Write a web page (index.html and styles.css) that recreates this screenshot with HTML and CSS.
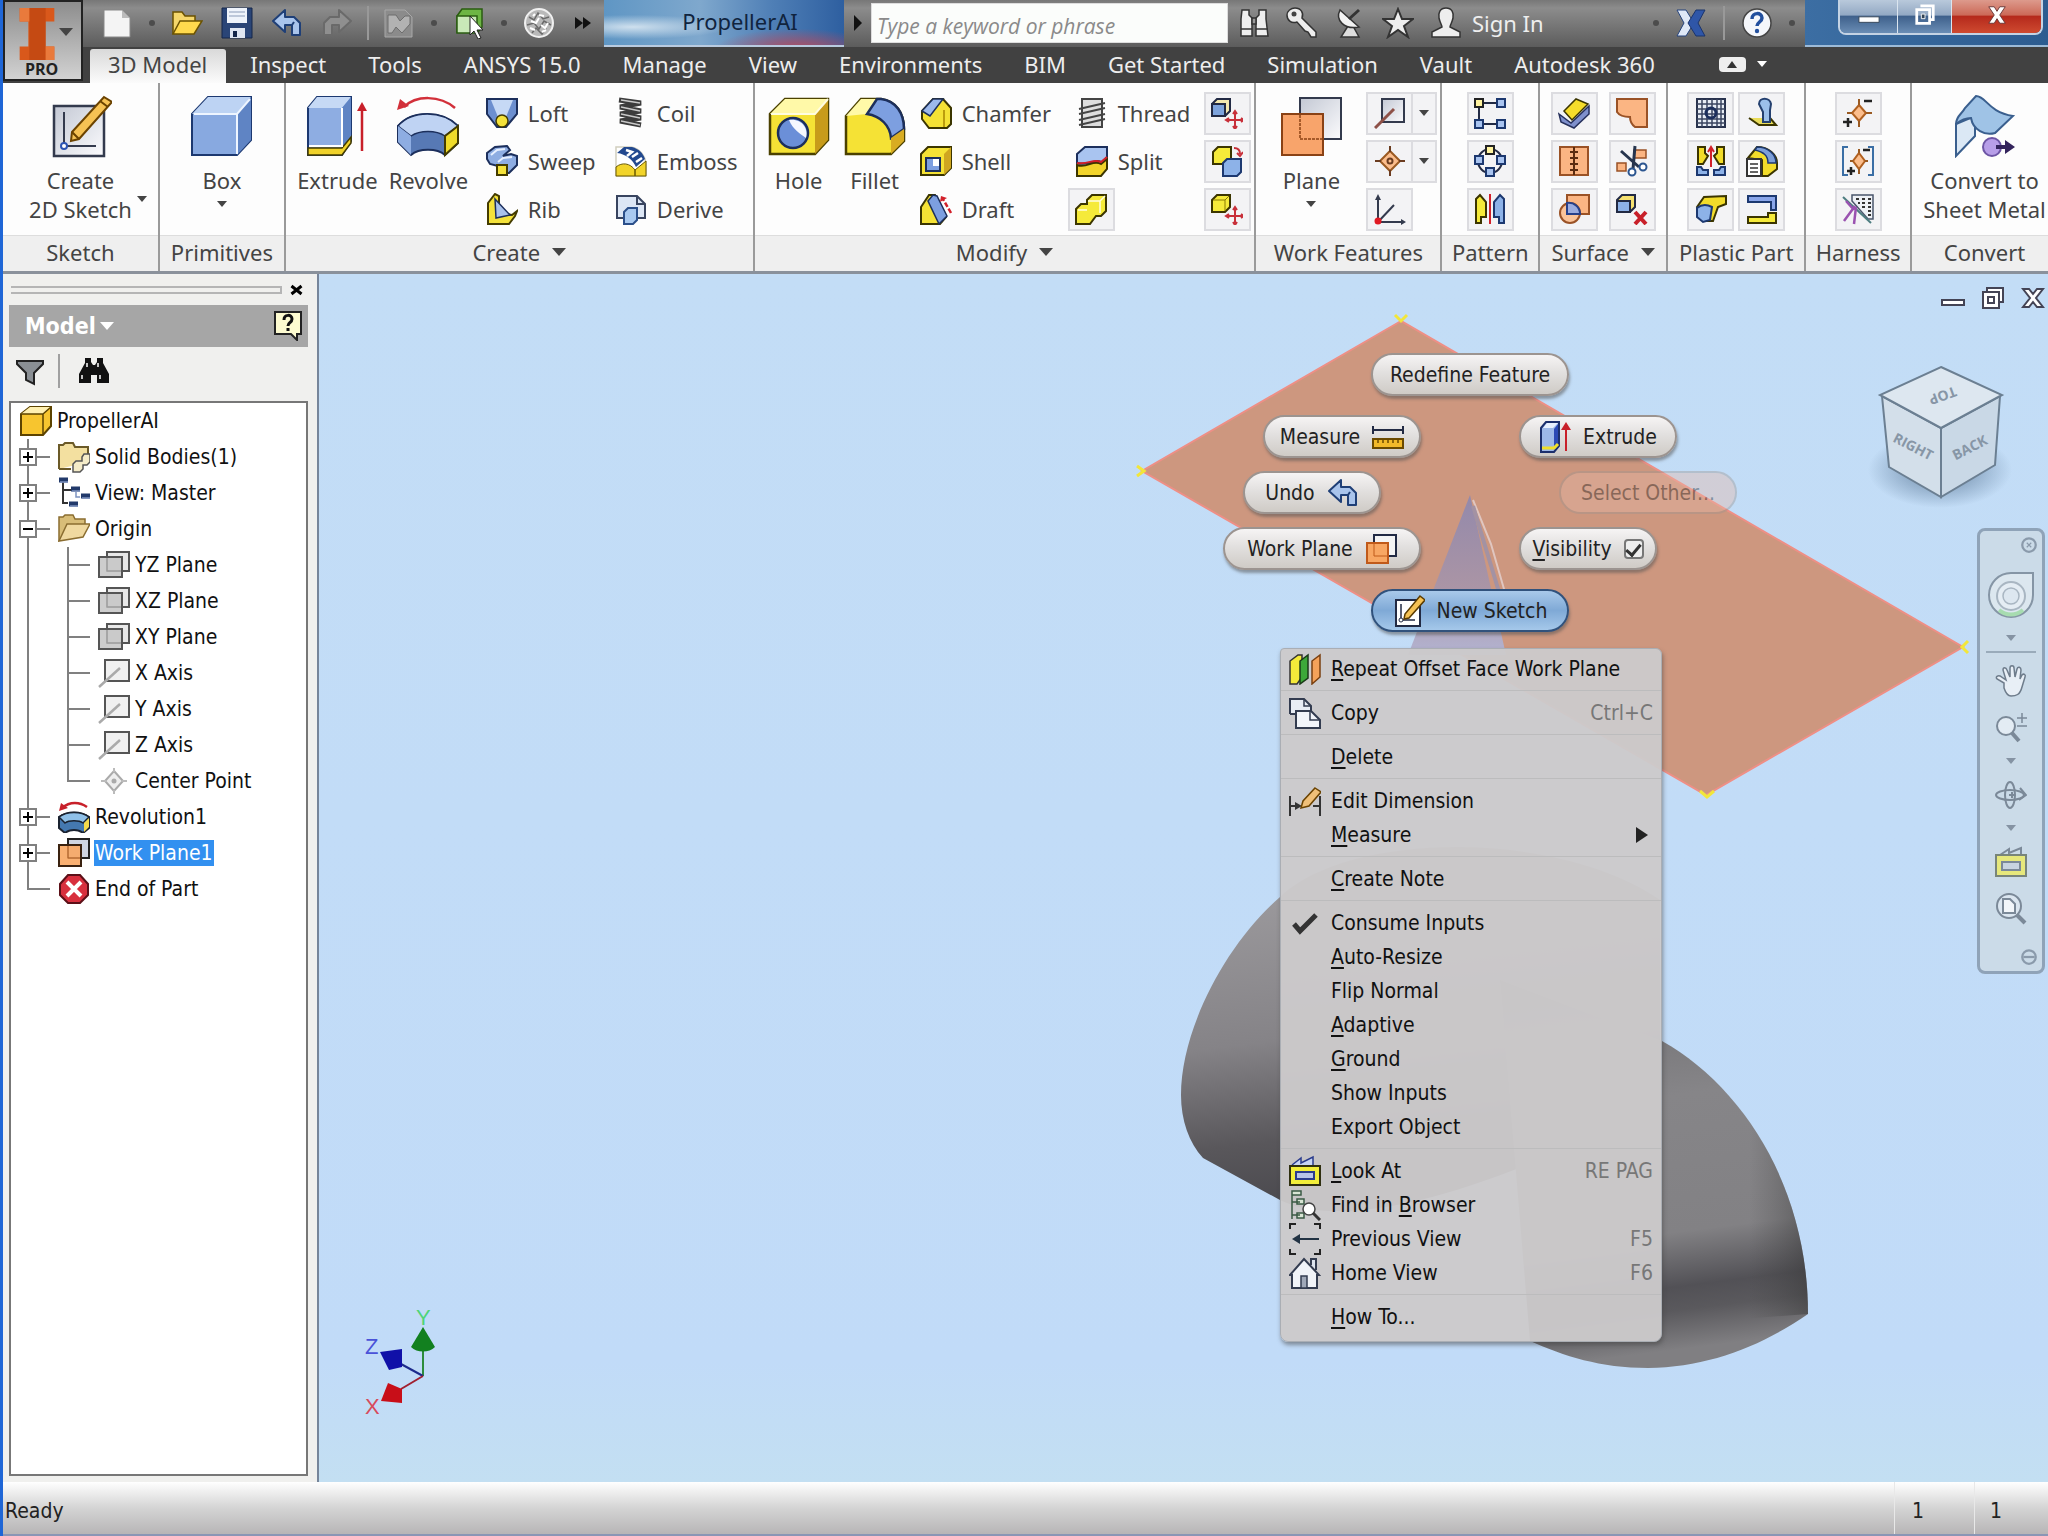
FILE: index.html
```html
<!DOCTYPE html>
<html lang="en">
<head>
<meta charset="utf-8">
<title>PropellerAI</title>
<link rel="stylesheet" href="styles.css">
</head>
<body>
<svg class="sprite" aria-hidden="true">
<defs>
<linearGradient id="gBlue" x1="0" y1="0" x2="1" y2="1"><stop offset="0" stop-color="#d3e2f8"/><stop offset="1" stop-color="#6f93cf"/></linearGradient>
<linearGradient id="gYel" x1="0" y1="0" x2="1" y2="1"><stop offset="0" stop-color="#fff9a8"/><stop offset="1" stop-color="#e8c800"/></linearGradient>
<linearGradient id="gOr" x1="0" y1="0" x2="1" y2="1"><stop offset="0" stop-color="#ffc093"/><stop offset="1" stop-color="#f59150"/></linearGradient>
<linearGradient id="gGray" x1="0" y1="0" x2="1" y2="1"><stop offset="0" stop-color="#c3c8d4"/><stop offset="1" stop-color="#fbfbfd"/></linearGradient>
</defs>
<symbol id="new" viewBox="0 0 32 32"><path d="M3 3h18l8 8v19H3z" fill="#f4f4f4" stroke="#888"/><path d="M21 3v8h8z" fill="#bbb"/></symbol>
<symbol id="open" viewBox="0 0 32 32"><path d="M2 27V5h9l3 4h10v5" fill="#f5d76b" stroke="#6b5200" stroke-width="1.5"/><path d="M2 27l7-13h22l-8 13z" fill="#ffd94d" stroke="#6b5200" stroke-width="1.5"/></symbol>
<symbol id="save" viewBox="0 0 32 32"><path d="M1 1h30v30H1z" fill="#2a4577" stroke="#14264a"/><path d="M6 1h20v15H6z" fill="#eef3fb"/><path d="M8 5h16M8 9h16" stroke="#8a9bb8"/><path d="M9 21h15v10H9z" fill="#dfe6f2"/><path d="M12 24h4v6h-4z" fill="#14264a"/></symbol>
<symbol id="undo" viewBox="0 0 32 32"><path d="M14 3L2 14l12 11v-7h7v10h8V16l-6-6h-9z" fill="#a9c4ec" stroke="#1f3f77" stroke-width="2" stroke-linejoin="round"/><path d="M21 18l2-3" stroke="#1f3f77" stroke-width="2"/></symbol>
<symbol id="redo" viewBox="0 0 32 32"><path d="M18 3l12 11-12 11v-7h-7v10H3V16l6-6h9z" fill="#8f8f8f" stroke="#6a6a6a" stroke-width="2" stroke-linejoin="round"/></symbol>
<symbol id="update" viewBox="0 0 32 32"><path d="M2 3h20l7 7v20H2z" fill="#8b8b8b" stroke="#a8a8a8"/><path d="M5 8h8l4 6 5-5h5v8l-8 9-6-6-4 6H5z" fill="#b2b2b2" stroke="#6d6d6d"/></symbol>
<symbol id="select" viewBox="0 0 32 32"><path d="M4 9l5-7h20v18l-4 5H4z" fill="#6db544" stroke="#2a5c10" stroke-width="1.5"/><path d="M4 9h20v17H4z" fill="#c9e8b8" stroke="#2a5c10" stroke-width="1.5"/><path d="M17 9v19l4-4 4 8 3-1-4-8h6z" fill="#fff" stroke="#222"/></symbol>
<symbol id="ball" viewBox="0 0 32 32"><circle cx="16" cy="16" r="14" fill="#b9b9b9" stroke="#f0f0f0" stroke-width="2"/><path d="M6 10l5 3 4-7 5 6 6-2M4 18l7-2 5 6 5-8 7 4M9 26l4-5 6 6 4-6" stroke="#6a6a6a" fill="none" stroke-width="1.500"/><path d="M8 14l5 2 3-5M18 18l4 3 3-5M7 21l5 2M16 8l5 1M19 25l4-2M10 9l2-2" stroke="#fff" fill="none" stroke-width="2"/></symbol>
<symbol id="binoc" viewBox="0 0 32 32"><path d="M4 3h7v5l3 3v18H3V12zM21 3h7v9l2 17H18V11l3-3z" fill="#eee" stroke="#333" stroke-width="1.5"/><path d="M14 11h4v6h-4zM3 22h11M18 22h12" fill="#999" stroke="#333" stroke-width="1.5"/></symbol>
<symbol id="key" viewBox="0 0 32 32"><path d="M9 1c6 0 9 5 7 10l14 14v5h-5l-3-5-3-1-8-9C5 17 1 13 1 8c0-4 4-7 8-7z" fill="#eee" stroke="#333" stroke-width="1.5"/><circle cx="8" cy="7" r="2.500" fill="#444"/></symbol>
<symbol id="dish" viewBox="0 0 32 32"><path d="M14 19l-7 11h18l-6-11z" fill="#ddd" stroke="#333" stroke-width="1.500"/><path d="M6 3c-5 10 4 20 19 17z" fill="#f2f2f2" stroke="#333" stroke-width="1.500"/><path d="M15 12L25 3" stroke="#333" stroke-width="3"/></symbol>
<symbol id="star" viewBox="0 0 32 32"><path d="M16 2l4 10h11l-9 7 4 11-10-7-10 7 4-11-9-7h11z" fill="#eee" stroke="#333" stroke-width="2"/></symbol>
<symbol id="person" viewBox="0 0 32 32"><path d="M16 1c6 0 8 5 7 10-1 5-3 7-3 9l10 5v5H2v-5l10-5c0-2-2-4-3-9-1-5 1-10 7-10z" fill="#eee" stroke="#333" stroke-width="1.500"/></symbol>
<symbol id="exch" viewBox="0 0 32 32"><path d="M2 3h9l8 13-8 13H2l7-13z" fill="#dfe8f6" stroke="#25437c"/><path d="M30 3h-9l-8 13 8 13h9l-7-13z" fill="#2f56a8" stroke="#1b346b"/></symbol>
<symbol id="help" viewBox="0 0 32 32"><circle cx="16" cy="16" r="14" fill="#f5f7fb" stroke="#444" stroke-width="1.500"/><path d="M11 12c0-7 10-7 10-1 0 4-5 4-5 8" fill="none" stroke="#23509e" stroke-width="3.500"/><circle cx="16" cy="24" r="2.200" fill="#23509e"/></symbol>

<symbol id="sketch" viewBox="0 0 64 64"><path d="M6 12h50v50H6z" fill="url(#gGray)" stroke="#333a4d" stroke-width="2.500"/><path d="M16 18v34h32" fill="none" stroke="#333a4d" stroke-width="2"/><circle cx="16" cy="52" r="3" fill="#fff" stroke="#2c55b3" stroke-width="2"/><path d="M56 3l8 5-33 37-8 2 1-9z" fill="#f6c254" stroke="#6b4300" stroke-width="2"/><path d="M24 38l7 7M52 7l8 6" stroke="#6b4300" stroke-width="2"/></symbol>
<symbol id="box" viewBox="0 0 64 64"><path d="M2 20L18 3h43v43L47 61H2z" fill="#88a9e0" stroke="#1c3870" stroke-width="2"/><path d="M2 20L18 3h43L47 20z" fill="#bdd3f3"/><path d="M47 20L61 3v43L47 61z" fill="#5f84c4"/><path d="M4 20h43l13-15M47 20v40" fill="none" stroke="#eef5ff" stroke-width="2"/></symbol>
<symbol id="extrude" viewBox="0 0 64 64"><path d="M3 14L12 3h34v44L37 61H3z" fill="#8eade2" stroke="#1c3870" stroke-width="2"/><path d="M3 14L12 3h34l-9 11z" fill="#c6d9f5"/><path d="M37 14l9-11v42l-9 8z" fill="#5f84c4"/><path d="M3 54h34l9-11v6L37 61H3z" fill="#f0d22a" stroke="#443c00" stroke-width="1.500"/><path d="M4 52h33V14" fill="none" stroke="#fff" stroke-width="2"/><path d="M57 57V14" stroke="#c8202a" stroke-width="2.500"/><path d="M57 8l5 9H52z" fill="#c8202a"/></symbol>
<symbol id="revolve" viewBox="0 0 64 64"><path d="M2 32C16 16 46 16 62 32v17L49 61c-8-7-26-7-34 0L2 48z" fill="#5779b5" stroke="#1c2f5c" stroke-width="2"/><path d="M2 32C16 16 46 16 62 32L49 42c-9-6-25-6-34 0z" fill="#bfd3f3" stroke="#1c2f5c" stroke-width="1.500"/><path d="M2 32l13 10v19L2 48z" fill="#8eade2"/><path d="M62 32L49 42v19l13-12z" fill="#f0dc2a" stroke="#443c00" stroke-width="2"/><path d="M8 13C20 1 44 1 59 14" fill="none" stroke="#d2303a" stroke-width="2.500"/><path d="M1 16l3-11 9 7z" fill="#d2303a"/></symbol>
<symbol id="loft" viewBox="0 0 32 32"><path d="M1 2h30v15L20 30h-9L1 17z" fill="#6c8fcf" stroke="#1c2f5c" stroke-width="2"/><path d="M5 3h22l-7 17h-8z" fill="#c6d9f5"/><circle cx="16" cy="24" r="6" fill="#f4e23a" stroke="#443c00" stroke-width="1.500"/></symbol>
<symbol id="sweep" viewBox="0 0 32 32"><path d="M1 8l8-6 12-1 3 4-7 6 8-2 6 2v9l-8 8H12v-7l-8-2-3-5z" fill="#8eade2" stroke="#1c2f5c" stroke-width="2"/><path d="M5 10l6-5 8-1M12 17l5-4 9-1" stroke="#e6efff" stroke-width="2" fill="none"/><path d="M11 20h10v10H11z" fill="#f4e23a" stroke="#443c00" stroke-width="2"/></symbol>
<symbol id="rib" viewBox="0 0 32 32"><path d="M2 10l7-9 4 2v17l13 2 5-4-2 5-6 8H2z" fill="#f4e23a" stroke="#443c00" stroke-width="2"/><path d="M9 6l15 16-14 3z" fill="#a9c2ec" stroke="#1c2f5c" stroke-width="1.500"/></symbol>
<symbol id="coil" viewBox="0 0 32 32"><path d="M4 3l22 3L5 10l21 4-21 3 21 4-21 3 21 4" fill="none" stroke="#3c3c3c" stroke-width="5"/><path d="M6 3l19 3M6 10l19 4M6 17l19 4M6 24l19 4" stroke="#c8c8c8" stroke-width="1.500"/></symbol>
<symbol id="emboss" viewBox="0 0 32 32"><path d="M1 2h15c8 1 15 9 15 18v11H1V20z" fill="#fff" stroke="#4b4100" stroke-width="1.500" stroke-opacity=".25"/><path d="M1 31V22c6-5 14-4 19 3V31zM20 25l11-9v15H20z" fill="#f2d42a" stroke="#6b5a00" stroke-width="1"/><path d="M2 8l7-6h8c7 2 11 6 13 12l-9 8C18 15 11 9 2 8z" fill="#23498f"/><path d="M11 5l6 2-5 4M17 12l6-4M21 17l6-4" stroke="#fff" stroke-width="2.500" fill="none"/></symbol>
<symbol id="derive" viewBox="0 0 32 32"><path d="M2 3h20l8 8v14H2z" fill="#dce6f5" stroke="#38445f" stroke-width="2"/><path d="M22 3v8h8" fill="none" stroke="#38445f" stroke-width="2"/><path d="M9 19l4-4h9v12l-4 4H9z" fill="#a9c9f0" stroke="#2b4f8a" stroke-width="2"/></symbol>
<symbol id="hole" viewBox="0 0 64 64"><path d="M3 20L18 5h43v41L48 60H3z" fill="#f5e235" stroke="#4b4100" stroke-width="2.500"/><path d="M3 20L18 5h43L48 20z" fill="#fff9a8"/><path d="M48 20L61 5v41L48 60z" fill="#c79b1a"/><path d="M61 5L48 20H4" fill="none" stroke="#fffde0" stroke-width="2"/><circle cx="26" cy="39" r="15" fill="#6b8fd8" stroke="#1c2f5c" stroke-width="2.500"/><path d="M22 26c12-2 20 8 17 18C34 40 26 36 22 26z" fill="#f5f8ff"/></symbol>
<symbol id="fillet" viewBox="0 0 64 64"><path d="M3 22L18 5h20c15 2 23 14 23 30v12L48 60H3z" fill="#f5e235" stroke="#4b4100" stroke-width="2.500"/><path d="M3 22L18 5h16L24 20z" fill="#fff9a8"/><path d="M34 5h4c15 2 23 14 23 30L48 44C47 32 38 22 24 20z" fill="#7d9fe0" stroke="#1c2f5c" stroke-width="2.500"/><path d="M48 44l13-9v12L48 60z" fill="#d8ac22"/></symbol>
<symbol id="chamfer" viewBox="0 0 32 32"><path d="M2 14L13 2h10l8 9v16l-4 4H9l-7-9z" fill="#f5e235" stroke="#3b3500" stroke-width="2"/><path d="M2 14L13 2h10L10 19z" fill="#9cb9ec" stroke="#1c2f5c" stroke-width="1.500"/><path d="M24 13v17" stroke="#a88600" stroke-width="1.500"/></symbol>
<symbol id="shell" viewBox="0 0 32 32"><path d="M1 9l7-7h23v21l-7 7H1z" fill="#f5e235" stroke="#3b3500" stroke-width="2"/><path d="M24 9l7-7v21l-7 7z" fill="#cfa620"/><path d="M6 13h14v13H6z" fill="#fff" stroke="#1c2f5c" stroke-width="2"/><path d="M7 14h6v7h6v4H7z" fill="#7d9fe0"/></symbol>
<symbol id="draft" viewBox="0 0 32 32"><path d="M1 14L9 2h6l11 22-6 7H1z" fill="#f5e235" stroke="#3b3500" stroke-width="2"/><path d="M8 8l5-6 4 1 10 20-8 8z" fill="#7d9fe0" stroke="#1c2f5c" stroke-width="1.500"/><path d="M31 20L23 6" stroke="#d2202a" stroke-width="2.500" stroke-dasharray="5 2"/><path d="M20 9l1-6 6 2z" fill="#d2202a"/></symbol>
<symbol id="thread" viewBox="0 0 32 32"><path d="M6 2h20v28H6z" fill="#ddd" stroke="#444" stroke-width="2"/><path d="M3 12l26-6M3 17l26-6M3 23l26-6M3 28l26-6" stroke="#444" stroke-width="2"/></symbol>
<symbol id="split" viewBox="0 0 32 32"><path d="M1 9l8-7h22v10l-5 6c-6-6-12 4-25 0z" fill="#a9c4f0" stroke="#1c2f5c" stroke-width="2"/><path d="M1 20c10 4 16-6 24-1l6-5v10l-6 7H1z" fill="#f2d42a" stroke="#3b3500" stroke-width="2"/><path d="M1 18c12 2 16-5 24-1l6-5" fill="none" stroke="#d2202a" stroke-width="2"/></symbol>
<symbol id="combine" viewBox="0 0 32 32"><path d="M1 16l5-5h6V7l5-5h14v16l-5 5h-5l-6 8H1z" fill="#f5ea3a" stroke="#3b3500" stroke-width="2"/><path d="M13 8h12V20M3 17h9M25 8l5-5" fill="none" stroke="#fffde0" stroke-width="1.500"/></symbol>
<symbol id="moveface" viewBox="0 0 32 32"><path d="M1 7l5-5h13v12l-5 5H1z" fill="#f4e9b0" stroke="#222a44" stroke-width="2"/><path d="M1 7h13v12H1z" fill="#7da3dc" stroke="#222a44" stroke-width="2"/><path d="M24 15v16M16 23h16M22 17l2-3 2 3M22 29l2 3 2-3M18 21l-3 2 3 2M30 21l3 2-3 2" stroke="#c8303a" stroke-width="2" fill="none"/></symbol>
<symbol id="copyobj" viewBox="0 0 32 32"><path d="M2 7l5-5h13v12l-5 5H2z" fill="#f5ea3a" stroke="#3b3500" stroke-width="2"/><path d="M12 18l4-4h14v13l-4 4H12z" fill="#8db2e8" stroke="#1c3870" stroke-width="2"/><path d="M23 3c4 0 6 2 6 6M26 8l3 3 3-4" fill="none" stroke="#c8303a" stroke-width="2"/></symbol>
<symbol id="movebody" viewBox="0 0 32 32"><path d="M1 7l5-5h13v12l-5 5H1z" fill="#f5ea3a" stroke="#3b3500" stroke-width="2"/><path d="M14 7v11M2 7h12l4-4" stroke="#8a7a00" fill="none"/><path d="M24 15v16M16 23h16M22 17l2-3 2 3M22 29l2 3 2-3M18 21l-3 2 3 2M30 21l3 2-3 2" stroke="#c8303a" stroke-width="2" fill="none"/></symbol>
<symbol id="plane" viewBox="0 0 64 64"><path d="M21 4h41v41H21z" fill="url(#gGray)" stroke="#333a4d" stroke-width="2"/><path d="M3 20h41v41H3z" fill="#f8a46b" stroke="#8a4215" stroke-width="2"/><path d="M21 21v24h22" fill="none" stroke="#8a4215" stroke-width="1.500" stroke-dasharray="3 1"/></symbol>
<symbol id="axis" viewBox="0 0 32 32"><path d="M8 2h22v23H8z" fill="url(#gGray)" stroke="#333a4d" stroke-width="2"/><path d="M1 31L20 12" stroke="#8e5148" stroke-width="3"/></symbol>
<symbol id="point" viewBox="0 0 32 32"><path d="M16 6l10 10-10 10L6 16z" fill="#fbbd8c" stroke="#9a5a22" stroke-width="2"/><path d="M16 1v6M16 25v6M1 16h6M25 16h6" stroke="#6b3c20" stroke-width="2"/><circle cx="16" cy="16" r="2.500" fill="none" stroke="#6b3c20" stroke-width="2"/></symbol>
<symbol id="ucs" viewBox="0 0 32 32"><path d="M4 29V4M4 29h26M4 29l16-17" stroke="#333a4d" stroke-width="2"/><path d="M1 7l3-6 3 6zM27 26l5 3-5 3z" fill="#333a4d"/><circle cx="4" cy="28" r="3.500" fill="#e01822"/></symbol>
<symbol id="rectpat" viewBox="0 0 32 32"><path d="M5 6h22M5 27h22M5 6v20" stroke="#222a44" stroke-width="2"/><path d="M1 2h8v8H1z" fill="#fff3a0" stroke="#222" stroke-width="2"/><path d="M23 2h8v8h-8zM1 23h8v8H1zM23 23h8v8h-8z" fill="#a9c4f0" stroke="#1c3870" stroke-width="2"/></symbol>
<symbol id="circpat" viewBox="0 0 32 32"><circle cx="16" cy="16" r="12" fill="none" stroke="#222a44" stroke-width="2"/><path d="M12 1h8v8h-8z" fill="#fff3a0" stroke="#222" stroke-width="2"/><path d="M1 11h8v8H1zM23 11h8v8h-8zM12 23h8v8h-8z" fill="#a9c4f0" stroke="#1c3870" stroke-width="2"/></symbol>
<symbol id="mirror" viewBox="0 0 32 32"><path d="M2 6l4-4 6 7v15H7v6H2z" fill="#f5ea3a" stroke="#3b3500" stroke-width="2"/><path d="M30 6l-4-4-6 7v15h5v6h5z" fill="#8db2e8" stroke="#1c3870" stroke-width="2"/><path d="M16 1v30" stroke="#d2202a" stroke-width="2"/></symbol>
<symbol id="thicken" viewBox="0 0 32 32"><path d="M1 17l12 9L31 9v8L16 31 3 25z" fill="#7f90cc" stroke="#26305c" stroke-width="1.500"/><path d="M6 14L18 2l12 5-16 16z" fill="#f5dc2a" stroke="#3b3500" stroke-width="1.500"/></symbol>
<symbol id="patch" viewBox="0 0 32 32"><path d="M1 2h30v28H19c-4-3-5-7-5-10C8 20 3 18 1 15z" fill="#fbb583" stroke="#9a5226" stroke-width="2"/></symbol>
<symbol id="stitch" viewBox="0 0 32 32"><path d="M2 2h28v28H2z" fill="#fbb583" stroke="#9a5226" stroke-width="2"/><path d="M16 2v28M12 7h8M12 13h8M12 19h8M12 25h8" stroke="#5c2c10" stroke-width="2"/></symbol>
<symbol id="trim" viewBox="0 0 32 32"><path d="M18 5h12v8H18zM1 18h9v8H1z" fill="#fbb583" stroke="#9a5226" stroke-width="1.500"/><path d="M5 6l18 16M19 1l-2 23" stroke="#26344d" stroke-width="3"/><circle cx="16" cy="27" r="3.500" fill="#fff" stroke="#2b5590" stroke-width="2"/><circle cx="27" cy="22" r="3.500" fill="#fff" stroke="#2b5590" stroke-width="2"/></symbol>
<symbol id="sculpt" viewBox="0 0 32 32"><path d="M9 2h22v19H9z" fill="#fbb583" stroke="#9a5226" stroke-width="2"/><circle cx="12" cy="20" r="10" fill="#fbc49a" stroke="#9a5226" stroke-width="2"/><path d="M9 10c7-1 13 4 13 11H9z" fill="#9bacdf" stroke="#26408a" stroke-width="2"/></symbol>
<symbol id="delface" viewBox="0 0 32 32"><path d="M1 7l5-5h13v12l-5 5H1z" fill="#f4e070" stroke="#222a44" stroke-width="2"/><path d="M1 8h13v11H1z" fill="#8db2e8" stroke="#222a44" stroke-width="2"/><path d="M19 19l11 12M30 19L19 31" stroke="#c8202a" stroke-width="4"/></symbol>
<symbol id="grill" viewBox="0 0 32 32"><path d="M2 2h28v28H2z" fill="#e8edf5" stroke="#28324d" stroke-width="2"/><path d="M2 7h28M2 12h28M2 17h28M2 22h28M2 26h28M7 2v28M12 2v28M17 2v28M22 2v28M26 2v28" stroke="#3a4560" stroke-width="1.500"/><circle cx="16" cy="16" r="5" fill="none" stroke="#1c2f5c" stroke-width="3"/></symbol>
<symbol id="boss" viewBox="0 0 32 32"><path d="M3 21l10 7h17l-6-7" fill="#e9dc5a" stroke="#3b3500" stroke-width="2"/><path d="M13 7c0-7 11-7 12 0l-1 6v12h-7V15z" fill="#9cc0ea" stroke="#24406f" stroke-width="2"/></symbol>
<symbol id="snap" viewBox="0 0 32 32"><path d="M3 2h7v6l3 3-5 8H3zM29 2h-7v6l-3 3 5 8h5z" fill="#f2dc2a" stroke="#3b3500" stroke-width="2"/><path d="M2 30v-8h4l2 3h5v5zM30 30v-8h-4l-2 3h-5v5z" fill="#8db2e8" stroke="#1c3870" stroke-width="2"/><path d="M16 22V4M13 7l3-5 3 5" stroke="#d2202a" stroke-width="2" fill="none"/></symbol>
<symbol id="rule" viewBox="0 0 32 32"><path d="M2 13L11 2c12 0 20 8 20 16v6l-9 7h-6V15z" fill="#f2dc2a" stroke="#3b3500" stroke-width="2"/><path d="M11 2c11 0 19 7 19 16h-8C22 10 17 7 9 5z" fill="#7d9fd8" stroke="#1c3870" stroke-width="1.500"/><path d="M1 14h14v17H1z" fill="#fff" stroke="#333" stroke-width="2"/><path d="M4 19h8M4 23h8M4 27h8" stroke="#333" stroke-width="1.500"/></symbol>
<symbol id="lip" viewBox="0 0 32 32"><path d="M2 14L9 4l22-1v8l-8 3-5 14H8z" fill="#f2dc2a" stroke="#3b3500" stroke-width="2"/><path d="M2 15c5-4 11-3 15-1l-2 13-7 2-6-5z" fill="#8db2e8" stroke="#1c3870" stroke-width="2"/></symbol>
<symbol id="rest" viewBox="0 0 32 32"><path d="M2 3h28v14h-5V9H2z" fill="#8aa6ea" stroke="#1c3870" stroke-width="2"/><path d="M2 24h20v-4h8v10H2z" fill="#f5ea3a" stroke="#3b3500" stroke-width="2"/></symbol>
<symbol id="pin" viewBox="0 0 32 32"><path d="M17 8l7 8-7 8-7-8z" fill="#fbbd8c" stroke="#b06020" stroke-width="2"/><path d="M17 2v6M17 24v6M5 16h5M24 16h6" stroke="#9a5a22" stroke-width="2"/><path d="M22 4h8M1 25h9M6 21v9" stroke="#222" stroke-width="2.500"/></symbol>
<symbol id="pingroup" viewBox="0 0 32 32"><path d="M6 2H1v28h5M26 2h5v28h-5" fill="none" stroke="#3a6ea5" stroke-width="2"/><path d="M17 8l6 8-6 8-6-8z" fill="#fbbd8c" stroke="#b06020" stroke-width="2"/><path d="M17 4v4M17 24v5M8 16h3M23 16h3" stroke="#9a5a22" stroke-width="2"/><path d="M21 5h7M5 26h8M9 22v8" stroke="#222" stroke-width="2.500"/></symbol>
<symbol id="hprop" viewBox="0 0 32 32"><path d="M10 2h21v24h-5L10 8z" fill="#eef1f6" stroke="#4a556b" stroke-width="1.500"/><path d="M14 6h3M20 6h3M26 6h3M16 10h2M20 10h3M26 10h3M20 14h3M26 14h3M26 18h3M26 22h3" stroke="#333" stroke-width="2"/><path d="M1 4l28 26" stroke="#4d7d80" stroke-width="2"/><path d="M2 28L13 13M12 31l2-17M4 8l8 9" stroke="#9a52b0" stroke-width="2.500"/></symbol>
<symbol id="convert" viewBox="0 0 64 64"><path d="M3 30L3 62 22 42V22z" fill="#dbe8f5" stroke="#3a5f8e" stroke-width="2"/><path d="M3 30c0-8 6-10 9-16l11-12c10 0 12 16 37 20L42 39C32 42 20 36 18 24c-4 0-10 2-15 6z" fill="#9fc3e6" stroke="#3a5f8e" stroke-width="2"/><circle cx="39" cy="53" r="9" fill="#b79ee8" stroke="#6d55a5" stroke-width="2"/><path d="M43 51h9v-5l10 7-10 7v-5h-9z" fill="#33245c"/></symbol>

<symbol id="funnel" viewBox="0 0 32 32"><path d="M3 6h26v3l-9 9v11l-8-4v-7L3 9z" fill="#8a8f94" stroke="#222" stroke-width="2"/></symbol>
<symbol id="find" viewBox="0 0 32 32"><path d="M7 3h6v4l2 3h2l2-3V3h6v5l6 11v9H19v-8h-6v8H1v-9L7 8z" fill="#111"/><path d="M4 20v4M9 8v4M22 20v4M20 8v4" stroke="#fff" stroke-width="1.500"/></symbol>
<symbol id="part" viewBox="0 0 32 32"><path d="M1 9l9-7h21v19l-8 9H1z" fill="#f7c52f" stroke="#5c4300" stroke-width="2"/><path d="M1 9l9-7h21l-8 7z" fill="#fff0b0"/><path d="M1 9h22v21M23 9l8-7" fill="none" stroke="#5c4300" stroke-width="1.500"/></symbol>
<symbol id="solid" viewBox="0 0 32 32"><path d="M1 28V4h4l2-2h8l2 4h13v15" fill="#f3e0a0" stroke="#6b5a28" stroke-width="2"/><path d="M1 28h12" stroke="#6b5a28" stroke-width="2"/><path d="M15 23l3-3h6v-4l2-3h6v8l-3 3h-4v4l-3 3h-7z" fill="#f5ecc8" stroke="#555" stroke-width="1.500"/></symbol>
<symbol id="view" viewBox="0 0 32 32"><path d="M5 5v21h5M5 13h9" fill="none" stroke="#333" stroke-width="2"/><path d="M1 3h9M13 12h9M23 19h9M11 27h9" stroke="#223a6b" stroke-width="5"/><path d="M2 5h8M14 14h8M24 21h8M12 29h8M18 15v5h4" stroke="#7d93c0" stroke-width="1.500" fill="none"/></symbol>
<symbol id="folder" viewBox="0 0 32 32"><path d="M1 28V4h4l2-2h8l2 4h10v5" fill="#d8bd78" stroke="#8a6d30" stroke-width="1.500"/><path d="M1 28L9 11h23L25 24z" fill="#f0d9a0" stroke="#8a6d30" stroke-width="1.500"/></symbol>
<symbol id="gplane" viewBox="0 0 32 32"><path d="M9 3h22v19H9z" fill="#e8e8e8" stroke="#555" stroke-width="2"/><path d="M1 8h23v20H1z" fill="#c4c4c4" fill-opacity=".85" stroke="#555" stroke-width="2"/><path d="M9 9v13h14" fill="none" stroke="#999"/></symbol>
<symbol id="gaxis" viewBox="0 0 32 32"><path d="M7 3h24v21H7z" fill="#f0f0f0" stroke="#555" stroke-width="2"/><path d="M1 30L22 11" stroke="#aaa" stroke-width="2.500"/></symbol>
<symbol id="gpoint" viewBox="0 0 32 32"><path d="M16 6l9 10-9 10-9-10z" fill="#eee" stroke="#aaa" stroke-width="2"/><path d="M16 3v4M16 25v4M3 16h5M24 16h5" stroke="#bbb" stroke-width="2"/><circle cx="16" cy="16" r="2.500" fill="#aaa"/></symbol>
<symbol id="revol" viewBox="0 0 32 32"><path d="M1 16c8-6 22-6 30 0v11l-6 5c-5-4-13-4-18 0l-6-5z" fill="#4478b0" stroke="#1a2230" stroke-width="2"/><path d="M1 16c8-6 22-6 30 0l-6 6c-4-3-14-3-18 0z" fill="#8fc0e8" stroke="#1a2230" stroke-width="1.500"/><path d="M26 22l5-5v9l-5 5z" fill="#f5d94a"/><path d="M4 7c8-7 18-6 25-1" fill="none" stroke="#c8202a" stroke-width="2.500"/><path d="M1 10l2-8 7 5z" fill="#c8202a"/></symbol>
<symbol id="wplane" viewBox="0 0 32 32"><path d="M10 2h21v19H10z" fill="#cfd5e2" stroke="#222" stroke-width="2"/><path d="M1 8h22v21H1z" fill="#f8a763" fill-opacity=".9" stroke="#3a2210" stroke-width="2"/><path d="M10 9v12h12" fill="none" stroke="#a85c26"/></symbol>
<symbol id="mplane" viewBox="0 0 32 32"><path d="M9 2h22v21H9z" fill="#f4f4f4" stroke="#222a44" stroke-width="2"/><path d="M2 10h21v20H2z" fill="#f8a763" stroke="#c05a1a" stroke-width="2"/><path d="M9 11v12h13" fill="none" stroke="#c05a1a"/></symbol>
<symbol id="endpart" viewBox="0 0 32 32"><path d="M10 2h12l8 9v11l-8 8H10l-8-8V11z" fill="#d8303e" stroke="#5c1018" stroke-width="2"/><path d="M9 9l14 14M23 9L9 23" stroke="#fff" stroke-width="4"/></symbol>

<symbol id="t-mid" viewBox="0 0 40 36"><path d="M10 0v36M10 18h22" stroke="#808080" stroke-width="2" fill="none"/></symbol>
<symbol id="t-last" viewBox="0 0 40 36"><path d="M10 0v18h22" stroke="#808080" stroke-width="2" fill="none"/></symbol>
<symbol id="t-pass" viewBox="0 0 40 36"><path d="M10 0v36" stroke="#808080" stroke-width="2"/></symbol>
<symbol id="t-plus" viewBox="0 0 40 36"><path d="M10 0v36M10 18h22" stroke="#808080" stroke-width="2"/><path d="M2 10h16v16H2z" fill="#fff" stroke="#808080" stroke-width="2"/><path d="M5 18h10M10 13v10" stroke="#000" stroke-width="2"/></symbol>
<symbol id="t-minus" viewBox="0 0 40 36"><path d="M10 0v36M10 18h22" stroke="#808080" stroke-width="2"/><path d="M2 10h16v16H2z" fill="#fff" stroke="#808080" stroke-width="2"/><path d="M5 18h10" stroke="#000" stroke-width="2"/></symbol>

<symbol id="ruler" viewBox="0 0 32 32"><path d="M1 9h30M1 5v8M31 5v8" stroke="#222a44" stroke-width="2"/><path d="M1 18h30v9H1z" fill="#f2b92a" stroke="#6b4a00" stroke-width="2"/><path d="M6 18v4M11 18v4M16 18v4M21 18v4M26 18v4" stroke="#6b4a00" stroke-width="1.500"/></symbol>
<symbol id="mextrude" viewBox="0 0 32 32"><path d="M2 7l5-6h13v24l-5 6H2z" fill="#9db8e8" stroke="#1c2f6c" stroke-width="2"/><path d="M4 7l4-5h11l-5 5z" fill="#e8f0fd"/><path d="M15 8l4-5v22l-4 4z" fill="#2c49b5"/><path d="M3 27h12l4-4" stroke="#f0e02a" stroke-width="3" fill="none"/><path d="M27 30V6" stroke="#c8202a" stroke-width="2"/><path d="M27 1l5 8H22z" fill="#c8202a"/></symbol>
<symbol id="msketch" viewBox="0 0 32 32"><path d="M3 5h24v26H3z" fill="#fff" stroke="#222a44" stroke-width="2"/><path d="M8 9v16h14" fill="none" stroke="#222a44" stroke-width="1.500"/><circle cx="8" cy="25" r="2" fill="#fff" stroke="#222a44"/><path d="M27 1l5 4-16 18-5 1 1-5z" fill="#f6c254" stroke="#5c3c00" stroke-width="1.500"/></symbol>
<symbol id="offset" viewBox="0 0 32 32"><path d="M1 8l8-6h4v22l-5 7H1z" fill="#f5ea3a" stroke="#333" stroke-width="1.500"/><path d="M11 8l8-6v23l-8 6z" fill="#3da83a" stroke="#1a3a18" stroke-width="1.500"/><path d="M23 8l8-6v22l-8 7z" fill="#f5a25a" stroke="#7a4010" stroke-width="1.500"/></symbol>
<symbol id="copy" viewBox="0 0 32 32"><path d="M1 17V2h14l7 7v6" fill="#e8edf5" stroke="#333c50" stroke-width="2"/><path d="M1 17h6" stroke="#333c50" stroke-width="2"/><path d="M7 14h15l9 9v8H7z" fill="#f2f5fa" stroke="#333c50" stroke-width="2"/><path d="M21 14v9h9M15 2v7h7" fill="none" stroke="#333c50" stroke-width="1.500"/></symbol>
<symbol id="editdim" viewBox="0 0 32 32"><path d="M1 11v20M31 11v20M1 21h10M24 21h7" stroke="#333" stroke-width="2"/><path d="M6 17v8l7-4z" fill="#333"/><path d="M26 3l6 4-12 14-8 2 2-7z" fill="#f0c078" stroke="#6b4300" stroke-width="1.500"/></symbol>
<symbol id="check" viewBox="0 0 32 32"><path d="M5 17l6 7L27 8" fill="none" stroke="#333" stroke-width="5"/></symbol>
<symbol id="lookat" viewBox="0 0 32 32"><path d="M3 10l9-7v5l12-6v8" fill="#c6d4f4" stroke="#2b3c8c" stroke-width="1.500"/><path d="M1 11h30v19H1z" fill="#f2ee3a" stroke="#2f2f10" stroke-width="2"/><path d="M7 17h18v7H7z" fill="#b8c4e8" stroke="#2b3c8c" stroke-width="2"/></symbol>
<symbol id="findb" viewBox="0 0 32 32"><path d="M3 6v24M3 2h9v4H3zM3 13h8M3 26h8M8 10h7v5H8zM8 24h7v5H8z" fill="#d8e4d4" stroke="#3a5a44" stroke-width="1.500"/><circle cx="20" cy="20" r="6" fill="#fff" stroke="#444" stroke-width="1.500"/><path d="M24 24l7 7" stroke="#333" stroke-width="3"/></symbol>
<symbol id="prev" viewBox="0 0 32 32"><path d="M1 6V1h6M25 1h6v5M1 26v5h6M25 31h6v-5" fill="none" stroke="#222" stroke-width="2"/><path d="M5 16h25" stroke="#234" stroke-width="2"/><path d="M3 16l8-5v10z" fill="#234"/></symbol>
<symbol id="home" viewBox="0 0 32 32"><path d="M22 8V2h5v11" fill="#dde4ee" stroke="#333c50" stroke-width="2"/><path d="M1 18L15 2l15 16h-2v13H3V18z" fill="#f0f3f8" stroke="#333c50" stroke-width="2"/><path d="M12 31V19h6v12z" fill="#9fa8b8" stroke="#333c50" stroke-width="1.500"/></symbol>

<symbol id="wheel" viewBox="0 0 48 48"><path d="M24 1h22v22a22 22 0 1 1-22-22z" fill="#dce7ef" stroke="#8595a5" stroke-width="2"/><circle cx="24" cy="24" r="14" fill="#e5edf4" stroke="#a9b6c2" stroke-width="2"/><circle cx="24" cy="24" r="8" fill="#dde7f0" stroke="#a9b6c2" stroke-width="1.500"/><path d="M12 38c7 6 17 6 24 0" stroke="#a7dcb0" stroke-width="4" fill="none"/></symbol>
<symbol id="hand" viewBox="0 0 32 32"><path d="M9 18L2 14c-2-2 1-4 3-3l6 4L8 5c0-3 3-3 4 0l3 7V3c0-3 4-3 4 0l1 9 2-8c1-3 4-2 4 1l-1 9 2-4c2-2 4 0 3 2l-3 10c-2 8-6 9-11 9-4 0-6-5-7-8z" fill="#e8eff6" stroke="#6e7c8b" stroke-width="1.500"/></symbol>
<symbol id="zoom" viewBox="0 0 32 32"><circle cx="11" cy="14" r="9" fill="#e3ecf4" stroke="#7b8998" stroke-width="2"/><path d="M17 21l7 8" stroke="#7b8998" stroke-width="4"/><path d="M22 6h10M27 1v10M22 14h10" stroke="#7b8998" stroke-width="1.500"/></symbol>
<symbol id="orbit" viewBox="0 0 32 32"><ellipse cx="15" cy="16" rx="5" ry="13" fill="none" stroke="#7b8998" stroke-width="2"/><ellipse cx="15" cy="16" rx="14" ry="5" fill="none" stroke="#7b8998" stroke-width="2"/><path d="M25 9l6 7-7 5M14 16h6M17 13v6" stroke="#7b8998" stroke-width="2" fill="none"/></symbol>
<symbol id="nlook" viewBox="0 0 32 32"><path d="M5 9l9-6v4l12-5v6" fill="none" stroke="#7b8998" stroke-width="2"/><path d="M1 9h30v21H1z" fill="#e6e87c" stroke="#78857a" stroke-width="2"/><path d="M7 16h18v8H7z" fill="#c8d4e0" stroke="#7b8998" stroke-width="2"/></symbol>
<symbol id="npage" viewBox="0 0 32 32"><circle cx="14" cy="13" r="12" fill="#dbe6f0" stroke="#7b8998" stroke-width="2"/><path d="M22 22l8 8" stroke="#7b8998" stroke-width="4"/><path d="M8 6h7l5 5v9H8z" fill="#f2f6fa" stroke="#7b8998" stroke-width="2"/></symbol>
</svg>

<div class="app">
<header class="head">
  <button class="appbtn" aria-label="Application menu">
    <svg class="appmark" viewBox="0 0 36 54"><path d="M0 0h36v14h-9v26h9v14H0V40h9V14H0z" fill="#d9581b"/><path d="M10 0h17v54H10z" fill="#b53f0d" opacity=".55"/><path d="M0 0h10v14H0zM27 40h9v14h-9z" fill="#e97a3c"/></svg>
    <span class="tri tri-big"></span>
    <span class="pro">PRO</span>
  </button>
  <div class="titlebar">
    <div class="qat">
      <button aria-label="New"><svg class="i"><use href="#new"/></svg></button><i class="dot"></i>
      <button aria-label="Open"><svg class="i"><use href="#open"/></svg></button>
      <button aria-label="Save"><svg class="i"><use href="#save"/></svg></button>
      <button aria-label="Undo"><svg class="i"><use href="#undo"/></svg></button>
      <button aria-label="Redo"><svg class="i"><use href="#redo"/></svg></button>
      <i class="vsep"></i>
      <button aria-label="Update"><svg class="i"><use href="#update"/></svg></button><i class="dot"></i>
      <button aria-label="Select"><svg class="i"><use href="#select"/></svg></button><i class="dot"></i>
      <button aria-label="Appearance"><svg class="i"><use href="#ball"/></svg></button>
      <button class="more" aria-label="More"><i class="play"></i><i class="play"></i></button>
    </div>
    <h1 class="doc">PropellerAI</h1>
    <div class="info">
      <button class="playbtn" aria-label="Collapse"><i class="play play-big"></i></button>
      <input class="search" type="text" placeholder="Type a keyword or phrase" aria-label="Search">
      <button aria-label="Search help"><svg class="i"><use href="#binoc"/></svg></button>
      <button aria-label="Subscription"><svg class="i"><use href="#key"/></svg></button>
      <button aria-label="Communication"><svg class="i"><use href="#dish"/></svg></button>
      <button aria-label="Favorites"><svg class="i"><use href="#star"/></svg></button>
      <button class="sign"><svg class="i"><use href="#person"/></svg>Sign In</button>
      <i class="dot push"></i>
      <button aria-label="Exchange"><svg class="i"><use href="#exch"/></svg></button>
      <i class="vsep"></i>
      <button aria-label="Help"><svg class="i"><use href="#help"/></svg></button><i class="dot"></i>
    </div>
    <div class="glass">
      <div class="winctl">
        <button aria-label="Minimize"><svg viewBox="0 0 24 24"><path d="M1 14h22v6H1z" fill="#fff" stroke="#345"/></svg></button>
        <button aria-label="Restore"><svg viewBox="0 0 24 24"><path d="M7 2h14v15h-3M3 6h14v15H3z" fill="none" stroke="#fff" stroke-width="3"/><path d="M8 11h4v5H8z" fill="#345" stroke="#fff"/></svg></button>
        <button class="close" aria-label="Close"><svg viewBox="0 0 24 24"><path d="M3 3h6l3 5 3-5h6l-6 9 6 9h-6l-3-5-3 5H3l6-9z" fill="#fff" stroke="#633"/></svg></button>
      </div>
    </div>
  </div>
  <nav class="tabs">
    <a href="#m" class="on">3D Model</a><a href="#m">Inspect</a><a href="#m">Tools</a><a href="#m">ANSYS 15.0</a><a href="#m">Manage</a><a href="#m">View</a><a href="#m">Environments</a><a href="#m">BIM</a><a href="#m">Get Started</a><a href="#m">Simulation</a><a href="#m">Vault</a><a href="#m">Autodesk 360</a>
    <button class="ribmin" aria-label="Minimize ribbon"><i class="cap"></i><i class="tri tri-white"></i></button>
  </nav>
</header>

<main class="ribbon" id="m">
  <section class="panel">
    <div class="tools mid"><button class="big"><svg class="I"><use href="#sketch"/></svg><span class="two">Create<br>2D Sketch</span><i class="tri corner"></i></button></div>
    <h2>Sketch</h2>
  </section>
  <section class="panel">
    <div class="tools mid"><button class="big"><svg class="I"><use href="#box"/></svg><span>Box</span><i class="tri"></i></button></div>
    <h2>Primitives</h2>
  </section>
  <section class="panel">
    <div class="tools">
      <button class="big w91"><svg class="I"><use href="#extrude"/></svg><span>Extrude</span></button>
      <button class="big w91"><svg class="I"><use href="#revolve"/></svg><span>Revolve</span></button>
      <div class="cols c-create">
        <button><svg class="i"><use href="#loft"/></svg>Loft</button><button><svg class="i"><use href="#coil"/></svg>Coil</button>
        <button><svg class="i"><use href="#sweep"/></svg>Sweep</button><button><svg class="i"><use href="#emboss"/></svg>Emboss</button>
        <button><svg class="i"><use href="#rib"/></svg>Rib</button><button><svg class="i"><use href="#derive"/></svg>Derive</button>
      </div>
    </div>
    <h2>Create <i class="tri tri-big"></i></h2>
  </section>
  <section class="panel">
    <div class="tools">
      <button class="big w76"><svg class="I"><use href="#hole"/></svg><span>Hole</span></button>
      <button class="big w76"><svg class="I"><use href="#fillet"/></svg><span>Fillet</span></button>
      <div class="cols c-modify">
        <button><svg class="i"><use href="#chamfer"/></svg>Chamfer</button><button><svg class="i"><use href="#thread"/></svg>Thread</button><button class="sq" aria-label="Move face"><svg class="i"><use href="#moveface"/></svg></button>
        <button><svg class="i"><use href="#shell"/></svg>Shell</button><button><svg class="i"><use href="#split"/></svg>Split</button><button class="sq" aria-label="Copy object"><svg class="i"><use href="#copyobj"/></svg></button>
        <button><svg class="i"><use href="#draft"/></svg>Draft</button><button class="sq pull" aria-label="Combine"><svg class="i"><use href="#combine"/></svg></button><button class="sq" aria-label="Move bodies"><svg class="i"><use href="#movebody"/></svg></button>
      </div>
    </div>
    <h2>Modify <i class="tri tri-big"></i></h2>
  </section>
  <section class="panel">
    <div class="tools">
      <button class="big w110"><svg class="I"><use href="#plane"/></svg><span>Plane</span><i class="tri"></i></button>
      <div class="cols c-work">
        <button class="sq" aria-label="Axis"><svg class="i"><use href="#axis"/></svg></button><button class="sq drop" aria-label="Axis options"><i class="tri"></i></button>
        <button class="sq" aria-label="Point"><svg class="i"><use href="#point"/></svg></button><button class="sq drop" aria-label="Point options"><i class="tri"></i></button>
        <button class="sq" aria-label="UCS"><svg class="i"><use href="#ucs"/></svg></button>
      </div>
    </div>
    <h2>Work Features</h2>
  </section>
  <section class="panel">
    <div class="tools mid"><div class="cols c-one">
      <button class="sq" aria-label="Rectangular"><svg class="i"><use href="#rectpat"/></svg></button>
      <button class="sq" aria-label="Circular"><svg class="i"><use href="#circpat"/></svg></button>
      <button class="sq" aria-label="Mirror"><svg class="i"><use href="#mirror"/></svg></button>
    </div></div>
    <h2>Pattern</h2>
  </section>
  <section class="panel">
    <div class="tools mid"><div class="cols c-two wide">
      <button class="sq" aria-label="Thicken"><svg class="i"><use href="#thicken"/></svg></button><button class="sq" aria-label="Patch"><svg class="i"><use href="#patch"/></svg></button>
      <button class="sq" aria-label="Stitch"><svg class="i"><use href="#stitch"/></svg></button><button class="sq" aria-label="Trim"><svg class="i"><use href="#trim"/></svg></button>
      <button class="sq" aria-label="Sculpt"><svg class="i"><use href="#sculpt"/></svg></button><button class="sq" aria-label="Delete face"><svg class="i"><use href="#delface"/></svg></button>
    </div></div>
    <h2>Surface <i class="tri tri-big"></i></h2>
  </section>
  <section class="panel">
    <div class="tools mid"><div class="cols c-two">
      <button class="sq" aria-label="Grill"><svg class="i"><use href="#grill"/></svg></button><button class="sq" aria-label="Boss"><svg class="i"><use href="#boss"/></svg></button>
      <button class="sq" aria-label="Snap fit"><svg class="i"><use href="#snap"/></svg></button><button class="sq" aria-label="Rule fillet"><svg class="i"><use href="#rule"/></svg></button>
      <button class="sq" aria-label="Rest"><svg class="i"><use href="#lip"/></svg></button><button class="sq" aria-label="Lip"><svg class="i"><use href="#rest"/></svg></button>
    </div></div>
    <h2>Plastic Part</h2>
  </section>
  <section class="panel">
    <div class="tools mid"><div class="cols c-one">
      <button class="sq" aria-label="Pin"><svg class="i"><use href="#pin"/></svg></button>
      <button class="sq" aria-label="Pin group"><svg class="i"><use href="#pingroup"/></svg></button>
      <button class="sq" aria-label="Properties"><svg class="i"><use href="#hprop"/></svg></button>
    </div></div>
    <h2>Harness</h2>
  </section>
  <section class="panel convert">
    <div class="tools mid"><button class="big"><svg class="I"><use href="#convert"/></svg><span class="two">Convert to<br>Sheet Metal</span></button></div>
    <h2>Convert</h2>
  </section>
</main>

<div class="work">
  <aside class="browser">
    <div class="grip"><i></i><button aria-label="Close"><svg viewBox="0 0 12 12"><path d="M1 2l10 8M11 2L1 10" stroke="#000" stroke-width="3"/></svg></button></div>
    <div class="mhead"><button class="model">Model <i class="tri tri-white tri-big"></i></button>
      <button class="mhelp" aria-label="Help"><svg viewBox="0 0 28 30"><path d="M1 1h26v22h-4v6l-6-6H1z" fill="#fdfbd0" stroke="#222" stroke-width="2"/><path d="M10 9c0-6 8-6 8-1 0 4-4 3-4 7M14 17v3" fill="none" stroke="#111" stroke-width="3"/></svg></button></div>
    <div class="mtools"><button aria-label="Filter"><svg class="i"><use href="#funnel"/></svg></button><i class="vline"></i><button aria-label="Find"><svg class="i"><use href="#find"/></svg></button></div>
    <ul class="tree">
      <li class="root"><svg class="i"><use href="#part"/></svg><span>PropellerAI</span></li>
      <li><button aria-label="Expand"><svg class="tw"><use href="#t-plus"/></svg></button><svg class="i"><use href="#solid"/></svg><span>Solid Bodies(1)</span></li>
      <li><button aria-label="Expand"><svg class="tw"><use href="#t-plus"/></svg></button><svg class="i"><use href="#view"/></svg><span>View: Master</span></li>
      <li><button aria-label="Collapse"><svg class="tw"><use href="#t-minus"/></svg></button><svg class="i"><use href="#folder"/></svg><span>Origin</span></li>
      <li><svg class="tw"><use href="#t-pass"/></svg><svg class="tw"><use href="#t-mid"/></svg><svg class="i"><use href="#gplane"/></svg><span>YZ Plane</span></li>
      <li><svg class="tw"><use href="#t-pass"/></svg><svg class="tw"><use href="#t-mid"/></svg><svg class="i"><use href="#gplane"/></svg><span>XZ Plane</span></li>
      <li><svg class="tw"><use href="#t-pass"/></svg><svg class="tw"><use href="#t-mid"/></svg><svg class="i"><use href="#gplane"/></svg><span>XY Plane</span></li>
      <li><svg class="tw"><use href="#t-pass"/></svg><svg class="tw"><use href="#t-mid"/></svg><svg class="i"><use href="#gaxis"/></svg><span>X Axis</span></li>
      <li><svg class="tw"><use href="#t-pass"/></svg><svg class="tw"><use href="#t-mid"/></svg><svg class="i"><use href="#gaxis"/></svg><span>Y Axis</span></li>
      <li><svg class="tw"><use href="#t-pass"/></svg><svg class="tw"><use href="#t-mid"/></svg><svg class="i"><use href="#gaxis"/></svg><span>Z Axis</span></li>
      <li><svg class="tw"><use href="#t-pass"/></svg><svg class="tw"><use href="#t-last"/></svg><svg class="i"><use href="#gpoint"/></svg><span>Center Point</span></li>
      <li><button aria-label="Expand"><svg class="tw"><use href="#t-plus"/></svg></button><svg class="i"><use href="#revol"/></svg><span>Revolution1</span></li>
      <li><button aria-label="Expand"><svg class="tw"><use href="#t-plus"/></svg></button><svg class="i"><use href="#wplane"/></svg><span class="sel">Work Plane1</span></li>
      <li><svg class="tw"><use href="#t-last"/></svg><svg class="i"><use href="#endpart"/></svg><span>End of Part</span></li>
    </ul>
  </aside>

  <div class="view">
    <svg class="scene" viewBox="317 274 1731 1208">
      <defs>
        <linearGradient id="lobeL" x1="0" y1="0" x2="0.150" y2="1"><stop offset="0" stop-color="#a3a1a4"/><stop offset=".55" stop-color="#858387"/><stop offset=".82" stop-color="#59575b"/><stop offset="1" stop-color="#4a494e"/></linearGradient>
        <linearGradient id="lobeR" x1="0" y1="0" x2="0.100" y2="1"><stop offset="0" stop-color="#6c6b6e"/><stop offset=".35" stop-color="#868588"/><stop offset=".7" stop-color="#828184"/><stop offset=".84" stop-color="#525156"/><stop offset=".9" stop-color="#5a595d"/><stop offset="1" stop-color="#807f82"/></linearGradient>
        <linearGradient id="edge" x1="0" y1="0" x2="1" y2="0"><stop offset=".6" stop-color="#444" stop-opacity="0"/><stop offset="1" stop-color="#333" stop-opacity=".45"/></linearGradient>
        <radialGradient id="shade"><stop offset=".5" stop-color="#7f9bb8" stop-opacity=".7"/><stop offset="1" stop-color="#7f9bb8" stop-opacity="0"/></radialGradient>
        <linearGradient id="spike" x1="0" y1="0" x2="0" y2="1"><stop offset="0" stop-color="#9389ab"/><stop offset=".6" stop-color="#ab95a5"/><stop offset="1" stop-color="#b3b4d2"/></linearGradient>
      </defs>
      <path d="M1660 900C1560 830 1350 830 1280 897 1225 945 1181 1030 1181 1095c0 25 8 48 22 63l77 42c60 30 200 0 380-100z" fill="url(#lobeL)"/>
      <path d="M1500 980l162 61c80 45 146 145 146 273-48 33-100 53-160 54-48 0-84-12-118-27z" fill="url(#lobeR)"/>
      <path d="M1662 1041c80 45 146 145 146 273L1662 1325z" fill="url(#edge)"/>
      <path d="M1401 321L1142 471l564 324 257-148z" fill="#cd977f" stroke="#ee8f86" stroke-width="2"/>
      <path d="M1470 495l-62 160h98z" fill="url(#spike)"/>
      <path d="M1473 500l18 44 15 52" stroke="#e0c6c0" stroke-width="2" fill="none"/><path d="M1473 506l26 86" stroke="#a392a3" stroke-width="4"/>
      <g fill="none" stroke="#f2e63a" stroke-width="3"><path d="M1395 315l6 6 6-6M1137 466l7 5-7 5M1968 641l-6 6 6 6M1700 791l7 6 7-6"/></g>
      <path d="M423 1376v-26" stroke="#2c8c3c" stroke-width="2"/><path d="M411 1347l12-20 12 20c-6 6-18 6-24 0z" fill="#12801f"/>
      <path d="M423 1376l-22-12" stroke="#1c2a8c" stroke-width="2"/><path d="M380 1352l22-3v18l-13 3z" fill="#1010a8"/>
      <path d="M423 1376l-22 13" stroke="#a02030" stroke-width="2"/><path d="M381 1401l7-18 14 6v14z" fill="#c80e18"/>
      <g font-family="Liberation Sans, Arial, sans-serif" font-size="22"><text x="416" y="1325" fill="#4fd477">Y</text><text x="365" y="1354" fill="#4a52d8">Z</text><text x="365" y="1414" fill="#d84a5c">X</text></g>
    </svg>

    <button class="mk" style="left:1052px;top:79px;width:198px">Redefine Feature</button>
    <button class="mk" style="left:944px;top:141px;width:158px">Measure<svg class="i"><use href="#ruler"/></svg></button>
    <button class="mk" style="left:1200px;top:141px;width:158px"><svg class="i"><use href="#mextrude"/></svg>Extrude</button>
    <button class="mk" style="left:924px;top:197px;width:138px">Undo<svg class="i"><use href="#undo"/></svg></button>
    <button class="mk off" style="left:1240px;top:197px;width:178px" disabled>Select Other...</button>
    <button class="mk" style="left:904px;top:253px;width:198px">Work Plane<svg class="i"><use href="#mplane"/></svg></button>
    <label class="mk" style="left:1200px;top:253px;width:138px"><span><u>V</u>isibility</span><input type="checkbox" checked></label>
    <button class="mk hot" style="left:1052px;top:315px;width:198px"><svg class="i"><use href="#msketch"/></svg>New Sketch</button>

    <ul class="menu">
      <li><button><svg class="i"><use href="#offset"/></svg><span><u>R</u>epeat Offset Face Work Plane</span></button></li>
      <li class="sep"><button><svg class="i"><use href="#copy"/></svg><span>Copy</span><kbd>Ctrl+C</kbd></button></li>
      <li class="sep"><button><svg class="i"></svg><span><u>D</u>elete</span></button></li>
      <li class="sep"><button><svg class="i"><use href="#editdim"/></svg><span>Edit Dimension</span></button></li>
      <li><button><svg class="i"></svg><span><u>M</u>easure</span><i class="sub"></i></button></li>
      <li class="sep"><button><svg class="i"></svg><span><u>C</u>reate Note</span></button></li>
      <li class="sep"><button><svg class="i"><use href="#check"/></svg><span>Consume Inputs</span></button></li>
      <li><button><svg class="i"></svg><span><u>A</u>uto-Resize</span></button></li>
      <li><button><svg class="i"></svg><span>Flip Normal</span></button></li>
      <li><button><svg class="i"></svg><span><u>A</u>daptive</span></button></li>
      <li><button><svg class="i"></svg><span><u>G</u>round</span></button></li>
      <li><button><svg class="i"></svg><span>Show Inputs</span></button></li>
      <li><button><svg class="i"></svg><span>Export Object</span></button></li>
      <li class="sep"><button><svg class="i"><use href="#lookat"/></svg><span><u>L</u>ook At</span><kbd>RE PAG</kbd></button></li>
      <li><button><svg class="i"><use href="#findb"/></svg><span>Find in <u>B</u>rowser</span></button></li>
      <li><button><svg class="i"><use href="#prev"/></svg><span>Previous View</span><kbd>F5</kbd></button></li>
      <li><button><svg class="i"><use href="#home"/></svg><span>Home View</span><kbd>F6</kbd></button></li>
      <li class="sep"><button><svg class="i"></svg><span><u>H</u>ow To...</span></button></li>
    </ul>

    <div class="docctl">
      <button aria-label="Minimize"><svg viewBox="0 0 24 24"><path d="M1 14h22v5H1z" fill="#fff" stroke="#445" stroke-width="2"/></svg></button>
      <button aria-label="Restore"><svg viewBox="0 0 24 24"><path d="M6 2h16v14h-4V6H6z" fill="#fff" stroke="#445" stroke-width="2"/><path d="M2 6h16v16H2z" fill="#fff" stroke="#445" stroke-width="2"/><path d="M7 11h6v6H7z" fill="none" stroke="#445" stroke-width="2"/></svg></button>
      <button aria-label="Close"><svg viewBox="0 0 24 24"><path d="M2 3h6l4 5 4-5h6l-7 9 7 9h-6l-4-5-4 5H2l7-9z" fill="#fff" stroke="#445" stroke-width="2"/></svg></button>
    </div>

    <svg class="cube" viewBox="1860 350 160 180">
      <ellipse cx="1940" cy="470" rx="72" ry="38" fill="url(#shade)"/>
      <path d="M1882 396l59 32v69l-52-30z" fill="#d3dfea" stroke="#6b7f92" stroke-width="2"/>
      <path d="M2000 396l-59 32v69l54-32z" fill="#c9d8e6" stroke="#6b7f92" stroke-width="2"/>
      <path d="M1941 367l61 28-61 33-61-33z" fill="#dde7f0" stroke="#6b7f92" stroke-width="2"/>
      <g font-family="Open Sans, sans-serif" font-weight="700" font-size="14" fill="#8796a6" text-anchor="middle"><text transform="translate(1911 451) rotate(27)">RIGHT</text><text transform="translate(1972 452) rotate(-27)">BACK</text><text transform="translate(1941 391) rotate(160)">TOP</text></g>
    </svg>

    <div class="nav">
      <button class="edge" aria-label="Close"><svg viewBox="0 0 16 16"><circle cx="8" cy="8" r="6" fill="none" stroke="#8a9aab" stroke-width="2"/><path d="M6 6l4 4M10 6l-4 4" stroke="#8a9aab"/></svg></button>
      <button aria-label="Wheel"><svg class="wh"><use href="#wheel"/></svg></button>
      <i class="tri tri-nav wheeltri"></i>
      <i class="rule"></i>
      <button aria-label="Pan"><svg class="i"><use href="#hand"/></svg></button>
      <button aria-label="Zoom"><svg class="i"><use href="#zoom"/></svg></button>
      <i class="tri tri-nav"></i>
      <button aria-label="Orbit"><svg class="i"><use href="#orbit"/></svg></button>
      <i class="tri tri-nav"></i>
      <button aria-label="Look at"><svg class="i"><use href="#nlook"/></svg></button>
      <button aria-label="Zoom page"><svg class="i"><use href="#npage"/></svg></button>
      <button class="edge last" aria-label="Options"><svg viewBox="0 0 16 16"><circle cx="8" cy="8" r="6" fill="none" stroke="#8a9aab" stroke-width="2"/><path d="M3 8h10" stroke="#8a9aab" stroke-width="2"/></svg></button>
    </div>
  </div>
</div>

<footer class="status"><span class="grow">Ready</span><span class="cell">1</span><span class="cell end">1</span></footer>
</div>
</body>
</html>
```
FILE: styles.css
```css
* { box-sizing: border-box; }
body { margin: 0; background: #1f66d6; }
button { margin: 0; padding: 0; border: 0; background: none; font: inherit; color: inherit; cursor: default; display: flex; align-items: center; }
h1, h2, ul, li { margin: 0; padding: 0; list-style: none; font-weight: 400; }
svg { display: block; flex: none; }
i { font-style: normal; flex: none; }
a { color: inherit; text-decoration: none; }
u { text-underline-offset: 3px; text-decoration-thickness: 2px; }
.sprite { position: absolute; width: 0; height: 0; }
.i { width: 32px; height: 32px; }
.I { width: 64px; height: 64px; }

.app { min-height: 100vh; margin-left: 3px; display: flex; flex-direction: column; background: #f0f0f0; font-family: "Noto Sans", "Open Sans", sans-serif; font-size: 22px; color: #444; }

.tri { width: 0; height: 0; border: 5px solid transparent; border-top: 6px solid #444; border-bottom: 0; }
.tri-big { border-width: 8px 7px 0; }
.tri-white { border-top-color: #fff; }
.tri-nav { border-top-color: #8593a3; }
.dot { width: 6px; height: 6px; border-radius: 3px; background: #4c4c4c; }
.play { width: 0; height: 0; border: 6px solid transparent; border-left: 8px solid #111; border-right: 0; }
.play-big { border-width: 8px 0 8px 8px; }
.vsep { width: 2px; height: 34px; background: #999; }

/* Title bar and tabs */
.head { display: grid; grid-template: 47px 36px / 80px minmax(0, 1fr); background: #414141; }
.appbtn { grid-row: 1 / 3; display: grid; grid-template: 60px 20px / 54px 26px; border: 2px solid #222; background: linear-gradient(#8d8d8d, #d2d2d2); margin-bottom: 2px; }
.appmark { width: 36px; height: 52px; margin: 3px 0 0 14px; }
.pro { grid-column: 1 / 3; padding-left: 20px; font: 700 16px/14px "Open Sans", sans-serif; color: #222; text-align: left; align-self: start; }
.titlebar { display: grid; grid-template-columns: 521px 240px minmax(0, 961fr) 243px; background: linear-gradient(#777 0, #8c8c8c 8px, #5c5c5c); }
.qat { display: flex; align-items: center; gap: 18px; padding: 0 0 2px 18px; }
.qat .dot { margin: 0 -2px; }
.qat .vsep { margin: 0 -4px; }
.more { gap: 0; margin-left: 2px; }
.doc { display: flex; align-items: center; justify-content: center; padding: 0 0 3px 32px; border-bottom: 2px solid #b9cbe0; font-size: 22px; line-height: 30px; color: #10243e; background: radial-gradient(ellipse at 80% 110%, #b84a5c 0, #b84a5c00 30%), radial-gradient(ellipse at 12% 60%, #cfe0ee 0, #cfe0ee00 32%), linear-gradient(90deg, #5f96c4, #7fa8cd 40%, #4f7fb6 70%, #2e5fa0); }
.info { display: flex; align-items: center; gap: 16px; padding: 0 10px 2px 0; }
.playbtn { width: 27px; padding-left: 10px; margin-right: -16px; }
.search { width: 357px; height: 40px; margin-right: -6px; border: 1px solid #ddd; background: #fbfdfb; padding: 6px 5px 0; font: italic 21px "Open Sans", sans-serif; color: #555; }
.search::placeholder { color: #8a8a8a; opacity: 1; }
.sign { gap: 10px; color: #eee; }
.push { margin-left: auto; }
.glass { background: linear-gradient(90deg, #3c6ea3, #2d5c90); border-bottom: 2px solid #9dbbd8; padding: 0 5px 0 33px; }
.winctl { height: 35px; display: grid; grid-template-columns: 58px 54px 1fr; border: 2px solid #c4d3e4; border-top: 0; border-radius: 0 0 8px 8px; overflow: hidden; }
.winctl button { justify-content: center; background: linear-gradient(#b9c9db 0, #93a9c4 45%, #3f618c 50%, #6a8db5); border-right: 1px solid #dbe5ef; }
.winctl .close { background: linear-gradient(#dd9a8c 0, #cc6a58 45%, #b52a1c 50%, #cf4a30); border: 0; }
.winctl svg { width: 24px; height: 22px; margin-bottom: 3px; }

.tabs { display: flex; align-items: flex-end; padding-left: 7px; color: #eee; line-height: 30px; }
.tabs a { padding: 0 21px 4px; white-space: nowrap; }
.tabs .on { background: linear-gradient(#d9d9d9, #fbfbfb); color: #444; padding: 0 19px 4px 18px; border-radius: 3px 3px 0 0; margin-right: 3px; }
.ribmin { align-self: center; gap: 11px; margin: 0 0 2px 43px; }
.cap { width: 27px; height: 15px; border-radius: 4px; background: #eee; display: flex; align-items: center; justify-content: center; }
.cap::after { content: ""; border: 5px solid transparent; border-bottom: 7px solid #333; border-top: 0; }

/* Ribbon */
.ribbon { display: grid; grid-template-columns: 157fr 126fr 469fr 502fr 186fr 98fr 128fr 138fr 106fr 136fr; background: #fdfdfd; border-bottom: 3px solid #8a919b; }
.panel { min-width: 0; display: flex; flex-direction: column; border-right: 2px solid #9a9a9a; }
.panel:last-child { border: 0; }
.panel h2 { height: 36px; display: flex; align-items: center; justify-content: center; gap: 12px; background: #efefef; border-top: 1px solid #ddd; font-size: 22px; line-height: 30px; padding-bottom: 4px; white-space: nowrap; }
.tools { height: 152px; padding: 6px 0 0 6px; display: flex; }
.mid { justify-content: center; padding-left: 0; }
.convert .tools, .convert h2 { padding-left: 9px; }
.big { position: relative; flex-direction: column; align-self: flex-start; padding-top: 5px; line-height: 29px; white-space: nowrap; }
.big .I { margin-bottom: 8px; }
.big .tri { margin-top: 6px; }
.big .corner { position: absolute; right: -15px; bottom: 22px; }
.w91 { width: 91px; }
.w76 { width: 76px; }
.w110 { width: 110px; padding-left: 0; margin-left: -6px; }
.cols { display: grid; grid-auto-rows: 48px; align-items: center; }
.cols button { gap: 10px; white-space: nowrap; line-height: 30px; }
.c-create { grid-template-columns: 129px auto; padding-left: 12px; }
.c-modify { grid-template-columns: 156px 128px 48px; padding-left: 7px; }
.c-work { grid-template-columns: 47px 24px; }
.c-one { grid-template-columns: 47px; }
.c-two { grid-template-columns: 47px 47px; gap: 0 4px; }
.wide { gap: 0 11px; }
.cols .sq { width: 47px; height: 43px; justify-content: center; background: #f3f3f5; border: 2px solid #dcdce0; }
.cols .drop { width: 24px; border-left: 0; }
.pull { margin-left: -8px; }

/* Model browser */
.work { flex: 1; display: flex; min-height: 0; font-family: "DejaVu Sans Condensed", "Noto Sans", sans-serif; font-size: 21px; color: #111; }
.browser { width: 314px; flex: none; display: flex; flex-direction: column; padding: 0 9px 6px 6px; background: #f0f0ee; }
.grip { height: 31px; display: flex; align-items: center; gap: 8px; padding-left: 2px; }
.grip i { flex: 1; height: 8px; border: 2px solid #b5b5b5; border-left: 0; }
.grip button { width: 18px; }
.grip svg { width: 13px; height: 12px; }
.mhead { height: 42px; display: flex; align-items: center; justify-content: space-between; padding: 0 6px 0 16px; background: #a6a6a6; color: #fff; }
.model { gap: 4px; font: 700 23px "DejaVu Sans Condensed", sans-serif; }
.mhelp svg { width: 28px; height: 30px; }
.mtools { height: 54px; display: flex; align-items: center; padding: 0 5px 6px; gap: 12px; }
.vline { width: 2px; height: 34px; background: #a0a0a0; margin-right: 6px; }
.tree { flex: 1; background: #fff; border: 2px solid #777; padding-left: 7px; }
.tree li { height: 36px; display: flex; align-items: center; white-space: nowrap; }
.tree .root { padding-left: 2px; }
.tree span { margin-left: 4px; padding: 0 1px; line-height: 26px; }
.tree .sel { background: #3290f0; color: #fff; }
.tw { width: 40px; height: 36px; }

/* Graphics window */
.view { flex: 1; position: relative; overflow: hidden; border-left: 2px solid #76859a; background: linear-gradient(#c3ddf6, #c1dbf8 90%, #c3dff2); min-height: 1208px; }
.scene { position: absolute; left: -2px; top: 0; width: 1731px; height: 1208px; }
.mk { position: absolute; height: 43px; display: flex; align-items: center; justify-content: center; gap: 12px; white-space: nowrap; font-size: 21px; color: #222; border: 2px solid #9c9490; border-radius: 22px; background: linear-gradient(#f6f4f4, #e2e0df 45%, #cfcbc6); box-shadow: 1px 3px 3px #5558; }
.mk input { appearance: none; margin: 0; width: 20px; height: 20px; border: 2px solid #777; border-radius: 4px; background: #eee; display: grid; place-items: center; }
.mk input::after { content: ""; width: 6px; height: 12px; border: solid #333; border-width: 0 3px 3px 0; rotate: 40deg; }
.off { opacity: .4; background: #e8b9a8; box-shadow: none; }
.hot { background: linear-gradient(#a9c9ea, #7fa9d6 50%, #a5c8ea); border-color: #31527c; }
.menu { position: absolute; left: 961px; top: 374px; width: 382px; padding: 3px 0 7px; background: #cccacbf5; border: 1px solid #aaaeb4; border-radius: 4px 6px 8px 8px; box-shadow: 1px 3px 4px #4448; }
.menu li button { width: 100%; height: 34px; padding: 0 8px; gap: 10px; text-align: left; }
.menu .sep { border-top: 1px solid #bcbcbd; margin-top: 4px; padding-top: 5px; }
.menu span { flex: 1; white-space: nowrap; }
.menu kbd { font: inherit; color: #777; }
.sub { border: 8px solid transparent; border-left: 12px solid #222; border-right: 0; margin-right: 5px; }
.docctl { position: absolute; right: 3px; top: 12px; display: flex; gap: 16px; }
.docctl svg { width: 24px; height: 24px; }
.cube { position: absolute; right: 28px; top: 76px; width: 160px; height: 180px; }
.nav { position: absolute; right: 3px; top: 254px; width: 68px; height: 446px; display: flex; flex-direction: column; align-items: center; padding: 5px 0; border: 3px solid #8fa3b8; border-radius: 8px; background: #cbdbe8; }
.nav .edge { align-self: flex-end; margin-right: 4px; }
.nav .edge svg { width: 18px; height: 18px; }
.nav .last { margin-top: auto; }
.nav .tri { margin: 6px 0 8px; }
.nav .i { margin: 7px 0 8px; }
.nav .wheeltri { margin: 15px 0 10px; }
.wh { width: 48px; height: 48px; margin-top: 18px; }
.rule { width: 50px; height: 2px; background: #9aabba; margin-bottom: 5px; }

.status { height: 54px; display: flex; align-items: stretch; line-height: 58px; background: linear-gradient(#fff, #d4d4d4 50%, #b7b5b6); border-bottom: 2px solid #8a96b5; font-family: "DejaVu Sans Condensed", sans-serif; font-size: 21px; color: #222; }
.grow { flex: 1; padding-left: 2px; }
.cell { width: 80px; padding-left: 17px; border-left: 1px solid #e8e8e8; }
.end { width: 74px; padding-left: 15px; }
```
